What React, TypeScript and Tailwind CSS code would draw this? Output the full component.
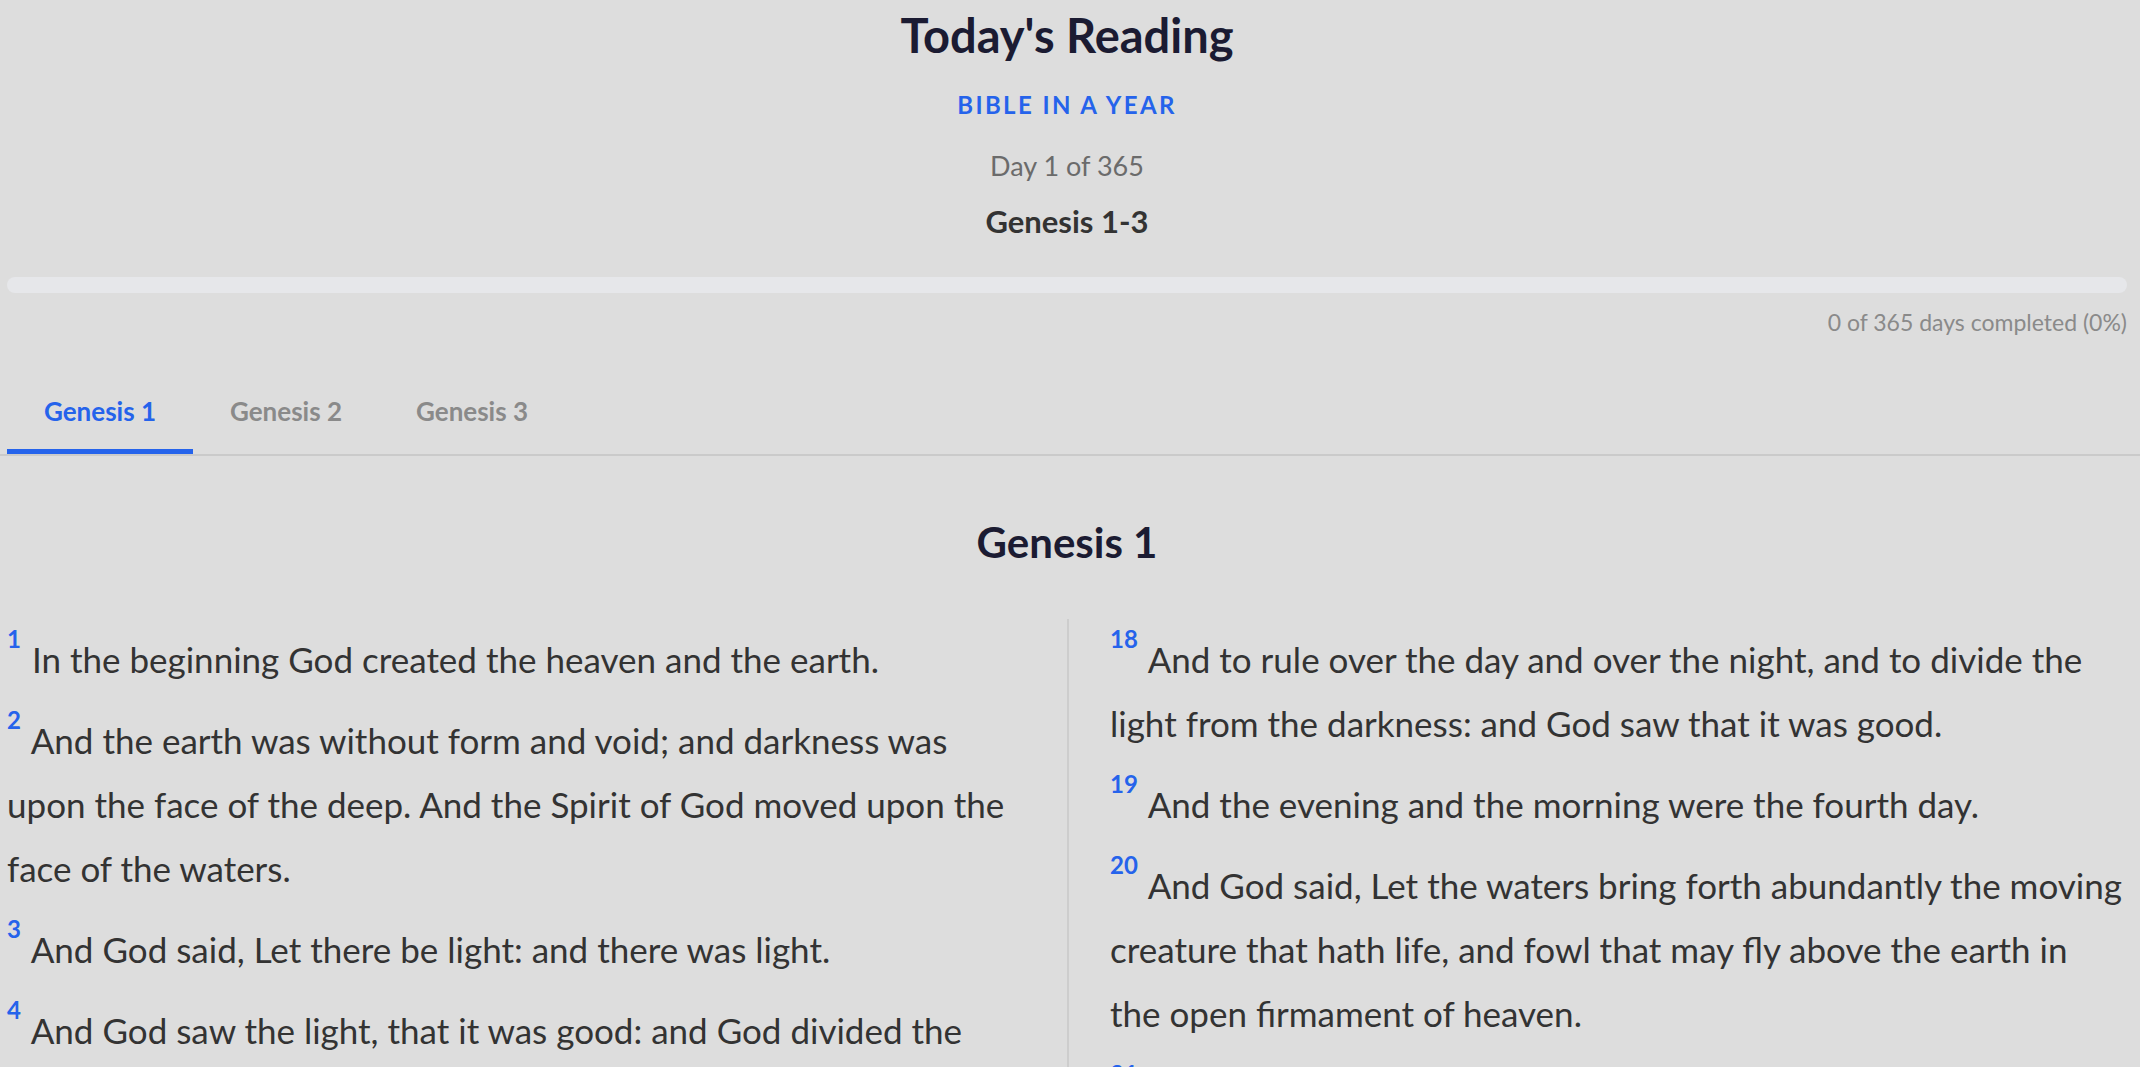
import { useState } from 'react';

const verses: [number, string][] = [
  [1, 'In the beginning God created the heaven and the earth.'],
  [2, 'And the earth was without form and void; and darkness was upon the face of the deep. And the Spirit of God moved upon the face of the waters.'],
  [3, 'And God said, Let there be light: and there was light.'],
  [4, 'And God saw the light, that it was good: and God divided the light from the darkness.'],
  [5, 'And God called the light Day, and the darkness he called Night. And the evening and the morning were the first day.'],
  [6, 'And God said, Let there be a firmament in the midst of the waters, and let it divide the waters from the waters.'],
  [7, 'And God made the firmament, and divided the waters which were under the firmament from the waters which were above the firmament: and it was so.'],
  [8, 'And God called the firmament Heaven. And the evening and the morning were the second day.'],
  [9, 'And God said, Let the waters under the heaven be gathered together unto one place, and let the dry land appear: and it was so.'],
  [10, 'And God called the dry land Earth; and the gathering together of the waters called he Seas: and God saw that it was good.'],
  [11, 'And God said, Let the earth bring forth grass, the herb yielding seed, and the fruit tree yielding fruit after his kind, whose seed is in itself, upon the earth: and it was so.'],
  [12, 'And the earth brought forth grass, and herb yielding seed after his kind, and the tree yielding fruit, whose seed was in itself, after his kind: and God saw that it was good.'],
  [13, 'And the evening and the morning were the third day.'],
  [14, 'And God said, Let there be lights in the firmament of the heaven to divide the day from the night; and let them be for signs, and for seasons, and for days, and years:'],
  [15, 'And let them be for lights in the firmament of the heaven to give light upon the earth: and it was so.'],
  [16, 'And God made two great lights; the greater light to rule the day, and the lesser light to rule the night: he made the stars also.'],
  [17, 'And God set them in the firmament of the heaven to give light upon the earth,'],
  [18, 'And to rule over the day and over the night, and to divide the light from the darkness: and God saw that it was good.'],
  [19, 'And the evening and the morning were the fourth day.'],
  [20, 'And God said, Let the waters bring forth abundantly the moving creature that hath life, and fowl that may fly above the earth in the open firmament of heaven.'],
  [21, 'And God created great whales, and every living creature that moveth, which the waters brought forth abundantly, after their kind, and every winged fowl after his kind: and God saw that it was good.'],
  [22, 'And God blessed them, saying, Be fruitful, and multiply, and fill the waters in the seas, and let fowl multiply in the earth.'],
  [23, 'And the evening and the morning were the fifth day.'],
  [24, 'And God said, Let the earth bring forth the living creature after his kind, cattle, and creeping thing, and beast of the earth after his kind: and it was so.'],
  [25, 'And God made the beast of the earth after his kind, and cattle after their kind, and every thing that creepeth upon the earth after his kind: and God saw that it was good.'],
  [26, 'And God said, Let us make man in our image, after our likeness: and let them have dominion over the fish of the sea, and over the fowl of the air, and over the cattle, and over all the earth, and over every creeping thing that creepeth upon the earth.'],
  [27, 'So God created man in his own image, in the image of God created he him; male and female created he them.'],
  [28, 'And God blessed them, and God said unto them, Be fruitful, and multiply, and replenish the earth, and subdue it: and have dominion over the fish of the sea, and over the fowl of the air, and over every living thing that moveth upon the earth.'],
  [29, 'And God said, Behold, I have given you every herb bearing seed, which is upon the face of all the earth, and every tree, in the which is the fruit of a tree yielding seed; to you it shall be for meat.'],
  [30, 'And to every beast of the earth, and to every fowl of the air, and to every thing that creepeth upon the earth, wherein there is life, I have given every green herb for meat: and it was so.'],
  [31, 'And God saw every thing that he had made, and, behold, it was very good. And the evening and the morning were the sixth day.'],
];

const tabs = ['Genesis 1', 'Genesis 2', 'Genesis 3'];

function Verse({ num, text }: { num: number; text: string }) {
  return (
    <p className="text-[35px] leading-[64px] text-[#333333] mb-[17px]">
      <span className="relative -top-[25px] align-baseline text-[24px] leading-none font-bold text-[#2563eb] mr-[2px]">{num}</span>{' '}
      {text}
    </p>
  );
}

export default function App() {
  const [activeTab, setActiveTab] = useState(0);
  const completed = 0;
  const total = 365;

  return (
    <div className="min-h-screen bg-[#dddddd] font-['Lato','Liberation_Sans',sans-serif]">
      <div className="pl-[7px] pr-[13px] pt-[5px]">
        <h1 className="text-center text-[47px] leading-[60px] font-bold text-[#1b1b32]">Today's Reading</h1>
        <div className="mt-[24px] text-center text-[24px] leading-[32px] font-bold tracking-[0.1em] text-[#2563eb]">BIBLE IN A YEAR</div>
        <div className="mt-[27px] text-center text-[27px] leading-[36px] text-[#6b6b6b]">Day 1 of 365</div>
        <div className="mt-[17px] text-center text-[31px] leading-[40px] font-bold text-[#333333]">Genesis 1-3</div>

        <div className="mt-[36px] h-[16px] rounded-full bg-[#e6e7ea] overflow-hidden">
          <div className="h-full rounded-full bg-[#2563eb]" style={{ width: `${(completed / total) * 100}%` }} />
        </div>
        <div className="mt-[14px] text-right text-[23px] leading-[30px] text-[#8a8a8a]">
          {completed} of {total} days completed (0%)
        </div>

        <div className="mt-[36px] -ml-[7px] -mr-[13px] pl-[7px] flex border-b-2 border-[#cacaca]">
          {tabs.map((tab, i) => (
            <button
              key={tab}
              onClick={() => setActiveTab(i)}
              className={`px-[37px] pt-[20px] pb-[20px] text-[26px] leading-[36px] font-bold border-b-[5px] ${
                activeTab === i ? 'text-[#2563eb] border-[#2563eb]' : 'text-[#8a8a8a] border-transparent'
              }`}
            >
              {tab}
            </button>
          ))}
        </div>

        <h2 className="mt-[60px] text-center text-[42px] leading-[52px] font-bold text-[#1b1b32]">{tabs[activeTab]}</h2>

        <div className="mt-[51px] grid grid-cols-2">
          <div className="pt-[8px] pr-[41px]">
            {verses.slice(0, 17).map(([n, t]) => (
              <Verse key={n} num={n} text={t} />
            ))}
          </div>
          <div className="pt-[8px] pl-[41px] pr-[4px] border-l-2 border-[#cdcdcd]">
            {verses.slice(17).map(([n, t]) => (
              <Verse key={n} num={n} text={t} />
            ))}
          </div>
        </div>
      </div>
    </div>
  );
}
